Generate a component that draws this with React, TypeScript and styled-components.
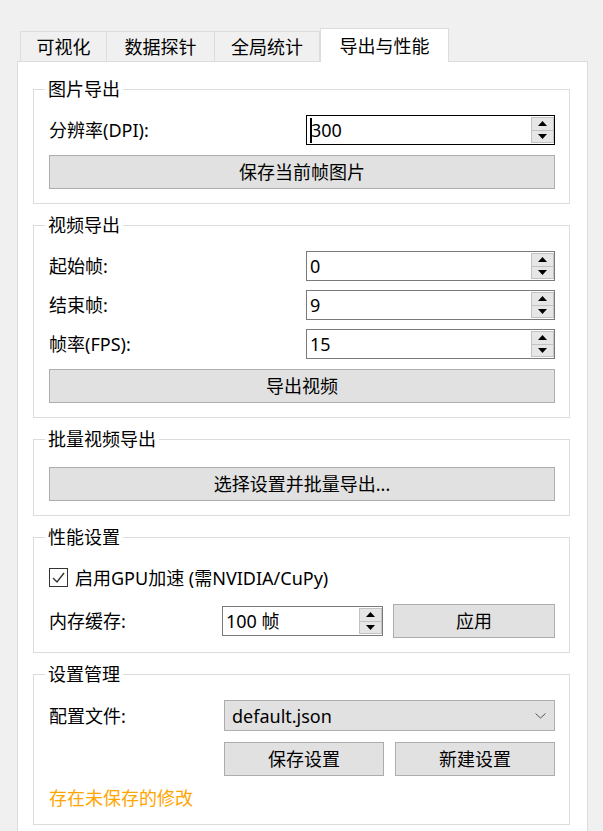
import styled, { createGlobalStyle, css } from "styled-components"

const GlobalStyle = createGlobalStyle`
  html, body {
    margin: 0;
    padding: 0;
    background: #f0f0f0;
    overflow: hidden;
  }
  body {
    font-family: "Noto Sans", "Noto Sans CJK SC", sans-serif;
    font-size: 18px;
    color: #000;
  }
  * {
    box-sizing: border-box;
  }
`

const Window = styled.div`
  height: 831px;
  padding-top: 28px;
  overflow: hidden;
`

const TabBar = styled.div`
  display: flex;
  align-items: flex-end;
  height: 33px;
  padding-left: 20px;
`

const Tab = styled.div<{ $active?: boolean; $w: number }>`
  width: ${p => p.$w}px;
  height: 30px;
  display: flex;
  align-items: center;
  justify-content: center;
  border: 1px solid #dcdcdc;
  border-bottom: none;
  background: #f0f0f0;
  margin-left: -1px;
  line-height: 22px;
  white-space: nowrap;
  &:first-child {
    margin-left: 0;
  }
  ${p => p.$active && css`
    position: relative;
    z-index: 1;
    height: 34px;
    margin-left: 0;
    margin-bottom: -1px;
    background: #fff;
  `}
`

const Pane = styled.div`
  margin-left: 17px;
  width: 571px;
  background: #fff;
  border: 1px solid #dcdcdc;
  padding: 17px 17px 40px 15px;
  display: flex;
  flex-direction: column;
  gap: 11px;
`

const Group = styled.fieldset`
  margin: 0;
  min-width: 0;
  border: 1px solid #dcdcdc;
  padding: 0 14px 14px 15px;
`

const GroupTitle = styled.legend`
  margin-left: -4px;
  padding: 0 3px;
  height: 21px;
  line-height: 21px;
  font-size: 18px;
`

const GroupBody = styled.div<{ $top?: number; $gap?: number }>`
  display: flex;
  flex-direction: column;
  padding-top: ${p => p.$top ?? 15}px;
  gap: ${p => p.$gap ?? 10}px;
`

const FormGrid = styled.div<{ $cols: string; $rowGap?: number }>`
  display: grid;
  grid-template-columns: ${p => p.$cols};
  row-gap: ${p => p.$rowGap ?? 9}px;
  align-items: center;
`

const Label = styled.span`
  line-height: 24px;
  white-space: nowrap;
`

const Spin = styled.div<{ $focused?: boolean }>`
  display: flex;
  align-items: center;
  height: 30px;
  border: 1px solid ${p => (p.$focused ? "#000" : "#7a7a7a")};
  background: #fff;
  padding: 1px 0 1px 3px;
`

const SpinText = styled.span`
  flex: 1;
  display: flex;
  align-items: center;
  line-height: 24px;
  white-space: nowrap;
`

const Caret = styled.span`
  width: 2px;
  height: 25px;
  background: #000;
  margin-right: -1px;
`

const SpinButtons = styled.div`
  display: flex;
  flex-direction: column;
  width: 23px;
  height: 100%;
`

const SpinButton = styled.div`
  flex: 1;
  display: flex;
  align-items: center;
  justify-content: center;
  background: #e6e6e6;
  border: 1px solid #c2c2c2;
  & + & {
    border-top: none;
  }
`

const Button = styled.button<{ $ml?: number }>`
  height: 34px;
  margin: 0 0 0 ${p => p.$ml ?? 0}px;
  padding: 0;
  border: 1px solid #adadad;
  background: #e1e1e1;
  color: #000;
  font-family: inherit;
  font-size: 18px;
  line-height: 24px;
`

const Combo = styled.div`
  height: 31px;
  display: flex;
  align-items: center;
  justify-content: space-between;
  border: 1px solid #adadad;
  background: #e1e1e1;
  padding: 0 8px 0 7px;
  line-height: 24px;
`

const ButtonPair = styled.div`
  display: grid;
  grid-template-columns: 1fr 1fr;
  column-gap: 11px;
`

const CheckRow = styled.label`
  display: flex;
  align-items: center;
  gap: 7px;
  height: 29px;
  line-height: 24px;
`

const CheckBox = styled.span`
  width: 19px;
  height: 19px;
  border: 1px solid #333;
  background: #fff;
  display: flex;
  align-items: center;
  justify-content: center;
`

const Notice = styled.div`
  color: #ffa500;
  line-height: 24px;
`

const ArrowUp = () => (
  <svg width="9" height="5" viewBox="0 0 9 5">
    <polygon points="0,5 4.5,0 9,5" fill="#000" />
  </svg>
)

const ArrowDown = () => (
  <svg width="9" height="5" viewBox="0 0 9 5">
    <polygon points="0,0 9,0 4.5,5" fill="#000" />
  </svg>
)

const SpinBox = ({ value, focused }: { value: string; focused?: boolean }) => (
  <Spin $focused={focused}>
    <SpinText>
      {focused && <Caret />}
      {value}
    </SpinText>
    <SpinButtons>
      <SpinButton><ArrowUp /></SpinButton>
      <SpinButton><ArrowDown /></SpinButton>
    </SpinButtons>
  </Spin>
)

const tabs = [
  { label: "可视化", w: 87 },
  { label: "数据探针", w: 109 },
  { label: "全局统计", w: 106 },
  { label: "导出与性能", w: 129, active: true },
]

const App = () => {
  return (
    <Window>
      <GlobalStyle />
      <TabBar>
        {tabs.map(t => (
          <Tab key={t.label} $w={t.w} $active={t.active}>{t.label}</Tab>
        ))}
      </TabBar>
      <Pane>
        <Group>
          <GroupTitle>图片导出</GroupTitle>
          <GroupBody>
            <FormGrid $cols="257px 1fr">
              <Label>分辨率(DPI):</Label>
              <SpinBox value="300" focused />
            </FormGrid>
            <Button>保存当前帧图片</Button>
          </GroupBody>
        </Group>

        <Group>
          <GroupTitle>视频导出</GroupTitle>
          <GroupBody>
            <FormGrid $cols="257px 1fr">
              <Label>起始帧:</Label>
              <SpinBox value="0" />
              <Label>结束帧:</Label>
              <SpinBox value="9" />
              <Label>帧率(FPS):</Label>
              <SpinBox value="15" />
            </FormGrid>
            <Button>导出视频</Button>
          </GroupBody>
        </Group>

        <Group>
          <GroupTitle>批量视频导出</GroupTitle>
          <GroupBody $top={17}>
            <Button>选择设置并批量导出...</Button>
          </GroupBody>
        </Group>

        <Group>
          <GroupTitle>性能设置</GroupTitle>
          <GroupBody $gap={12}>
            <CheckRow>
              <CheckBox>
                <svg width="15" height="13" viewBox="0 0 15 13">
                  <polyline points="2,7 6,11 13,2" fill="none" stroke="#333" strokeWidth="1.4" />
                </svg>
              </CheckBox>
              启用GPU加速 (需NVIDIA/CuPy)
            </CheckRow>
            <FormGrid $cols="173px 161px 1fr">
              <Label>内存缓存:</Label>
              <SpinBox value="100 帧" />
              <Button $ml={10}>应用</Button>
            </FormGrid>
          </GroupBody>
        </Group>

        <Group>
          <GroupTitle>设置管理</GroupTitle>
          <GroupBody>
            <FormGrid $cols="175px 1fr" $rowGap={11}>
              <Label>配置文件:</Label>
              <Combo>
                default.json
                <svg width="11" height="6" viewBox="0 0 11 6">
                  <polyline points="0.5,0.5 5.5,5 10.5,0.5" fill="none" stroke="#555" strokeWidth="1" />
                </svg>
              </Combo>
              <span />
              <ButtonPair>
                <Button>保存设置</Button>
                <Button>新建设置</Button>
              </ButtonPair>
            </FormGrid>
            <Notice>存在未保存的修改</Notice>
          </GroupBody>
        </Group>
      </Pane>
    </Window>
  )
}

export default App
